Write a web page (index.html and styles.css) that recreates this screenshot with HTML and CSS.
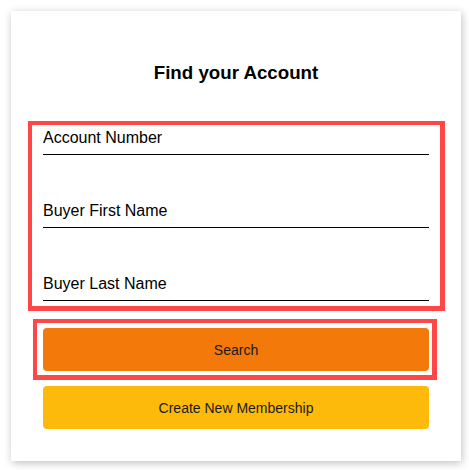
FILE: index.html
```html
<!DOCTYPE html>
<html lang="en">
<head>
<meta charset="utf-8">
<title>Find your Account</title>
<link rel="stylesheet" href="styles.css">
</head>
<body>
<div class="card">
  <h3 class="title">Find your Account</h3>
  <form class="form" onsubmit="return false;">
    <div class="fields">
      <input class="field" type="text" placeholder="Account Number">
      <input class="field" type="text" placeholder="Buyer First Name">
      <input class="field" type="text" placeholder="Buyer Last Name">
    </div>
    <div class="actions">
      <button class="btn btn-search" type="submit">Search</button>
      <button class="btn btn-create" type="button">Create New Membership</button>
    </div>
  </form>
  <div class="mark mark-fields"></div>
  <div class="mark mark-search"></div>
</div>
</body>
</html>
```

FILE: styles.css
```css
html, body {
  margin: 0;
  padding: 0;
  background: #ffffff;
}

body {
  padding: 11px;
  font-family: "Liberation Sans", Arial, sans-serif;
  color: #000;
}

.card {
  position: relative;
  box-sizing: border-box;
  width: 450px;
  height: 450px;
  padding: 32px;
  background: #fff;
  box-shadow: 1px 2px 8px rgba(0, 0, 0, 0.25);
}

.title {
  margin: 19px 0 41px;
  font-size: 18.72px;
  font-weight: bold;
  line-height: 22px;
  text-align: center;
}

.form {
  display: flex;
  flex-direction: column;
  margin: 0;
}

.fields {
  display: flex;
  flex-direction: column;
  gap: 43px;
}

.field {
  display: block;
  box-sizing: content-box;
  width: 100%;
  height: 19px;
  padding: 3px 0 7px;
  margin: 0;
  border: none;
  border-bottom: 1px solid #000;
  border-radius: 0;
  outline: none;
  background: transparent;
  font-family: "Liberation Sans", Arial, sans-serif;
  font-size: 16px;
  line-height: 19px;
  color: #000;
}

.field::placeholder {
  color: #000;
  opacity: 1;
}

.actions {
  display: flex;
  flex-direction: column;
  gap: 15px;
  margin-top: 27px;
}

.btn {
  display: block;
  width: 100%;
  height: 43px;
  margin: 0;
  padding: 0;
  border: none;
  border-radius: 4px;
  font-family: "Liberation Sans", Arial, sans-serif;
  font-size: 14px;
  color: #1a1a1a;
  cursor: pointer;
}

.btn-search {
  background: #f4790b;
}

.btn-create {
  background: #fdba0b;
}

.mark {
  position: absolute;
  box-sizing: border-box;
  border-style: solid;
  border-color: #ff4747;
  border-width: 4px 5px 5px 4px;
  pointer-events: none;
}

.mark-fields {
  left: 17px;
  top: 110px;
  width: 417px;
  height: 190px;
}

.mark-search {
  left: 22px;
  top: 308px;
  width: 404px;
  height: 61px;
}
```
